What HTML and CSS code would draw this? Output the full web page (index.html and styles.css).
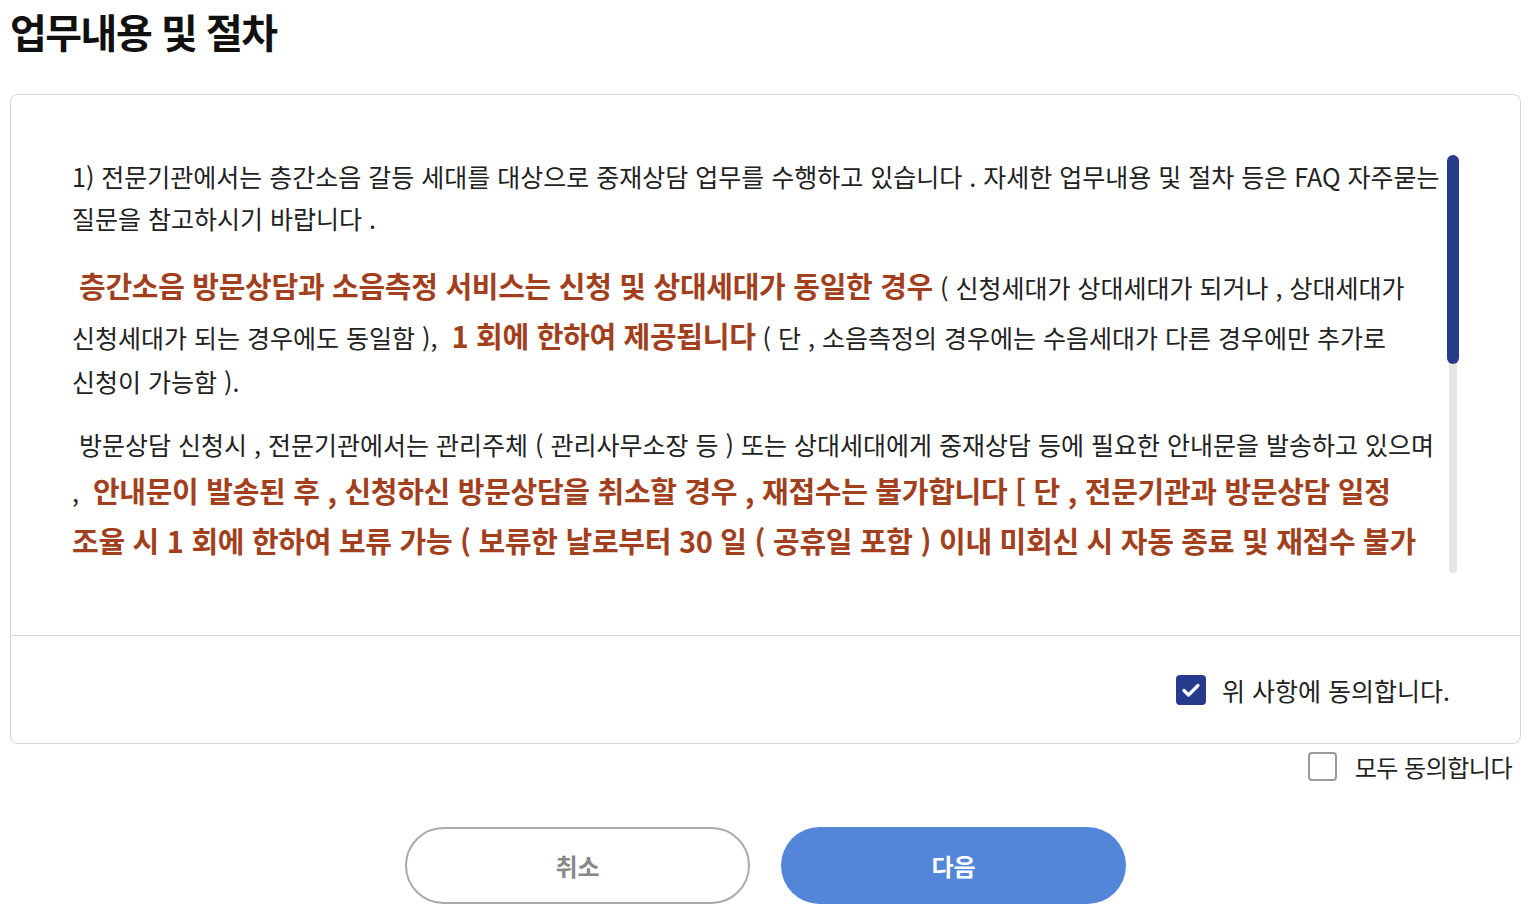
FILE: index.html
```html
<!DOCTYPE html>
<html lang="ko">
<head>
  <meta charset="UTF-8">
  <title>업무내용 및 절차</title>
  <link rel="stylesheet" href="styles.css">
</head>
<body>
  <h1 class="page-title">업무내용 및 절차</h1>

  <div class="terms-box">
    <div class="terms-body">
      <div class="scroll-wrap">
        <div class="terms-scroll" id="termsScroll">
          <p>1) 전문기관에서는 층간소음 갈등 세대를 대상으로 중재상담 업무를 수행하고 있습니다 . 자세한 업무내용 및 절차 등은 FAQ 자주묻는<br>질문을 참고하시기 바랍니다 .</p>
          <p>&nbsp;<strong class="warn">층간소음 방문상담과 소음측정 서비스는 신청 및 상대세대가 동일한 경우</strong> ( 신청세대가 상대세대가 되거나 , 상대세대가<br>신청세대가 되는 경우에도 동일함 ),&nbsp; <strong class="warn">1 회에 한하여 제공됩니다</strong> ( 단 , 소음측정의 경우에는 수음세대가 다른 경우에만 추가로<br>신청이 가능함 ).</p>
          <p>&nbsp;방문상담 신청시 , 전문기관에서는 관리주체 ( 관리사무소장 등 ) 또는 상대세대에게 중재상담 등에 필요한 안내문을 발송하고 있으며<br>,&nbsp; <strong class="warn">안내문이 발송된 후 , 신청하신 방문상담을 취소할 경우 , 재접수는 불가합니다 [ 단 , 전문기관과 방문상담 일정<br>조율 시 1 회에 한하여 보류 가능 ( 보류한 날로부터 30 일 ( 공휴일 포함 ) 이내 미회신 시 자동 종료 및 재접수 불가<br>) ]</strong> .</p>
          <p>2) 방문상담은 신청서 접수 후 전문기관의 검토를 거쳐 진행되며 , 상대세대의 동의가 없는 경우 상담이 제한될 수 있습니다 .</p>
          <p>3) 소음측정은 방문상담 이후 필요하다고 판단되는 경우에 한하여 실시되며 , 측정 일정은 전문기관과 협의하여 정합니다 .</p>
          <p>4) 신청 내용이 사실과 다르거나 허위로 작성된 경우 신청이 취소될 수 있습니다 .</p>
          <p>5) 상담 결과는 신청세대와 상대세대에 안내되며 , 전문기관은 법적 구속력이 있는 판단을 하지 않습니다 .</p>
          <p>6) 개인정보는 중재상담 업무 수행을 위한 목적으로만 이용되며 , 관련 법령에 따라 보관 기간이 지난 후에는 지체 없이<br>파기됩니다 .</p>
        </div>
        <div class="scroll-track" id="scrollTrack">
          <div class="scroll-thumb" id="scrollThumb"></div>
        </div>
      </div>
    </div>
    <div class="terms-agree">
      <label class="check">
        <input type="checkbox" checked>
        <span class="check-box">
          <svg viewBox="0 0 30 30" width="30" height="30"><path d="M8 15.5l4.5 4.5L22 10.5" fill="none" stroke="#fff" stroke-width="3.2" stroke-linecap="round" stroke-linejoin="round"/></svg>
        </span>
        위 사항에 동의합니다.
      </label>
    </div>
  </div>

  <div class="agree-all">
    <label class="check check-sm">
      <input type="checkbox">
      <span class="check-box"></span>
      모두 동의합니다
    </label>
  </div>

  <div class="btn-row">
    <button class="btn btn-cancel" type="button">취소</button>
    <button class="btn btn-next" type="button">다음</button>
  </div>

  <script>
    const termsScroll = document.getElementById('termsScroll');
    const scrollTrack = document.getElementById('scrollTrack');
    const scrollThumb = document.getElementById('scrollThumb');

    function updateThumb() {
      const trackHeight = scrollTrack.clientHeight;
      const ratio = termsScroll.clientHeight / termsScroll.scrollHeight;
      const thumbHeight = Math.max(30, trackHeight * ratio);
      const maxScroll = termsScroll.scrollHeight - termsScroll.clientHeight;
      const top = maxScroll > 0 ? (termsScroll.scrollTop / maxScroll) * (trackHeight - thumbHeight) : 0;
      scrollThumb.style.height = thumbHeight + 'px';
      scrollThumb.style.top = top + 'px';
    }

    termsScroll.addEventListener('scroll', updateThumb);
    window.addEventListener('resize', updateThumb);
    updateThumb();
  </script>
</body>
</html>
```

FILE: styles.css
```css
html, body {
  margin: 0;
  padding: 0;
  background: #fff;
}

body {
  padding: 0 7px 0 10px;
  font-family: "Noto Sans CJK KR", "Noto Sans", sans-serif;
  color: #222;
}

.page-title {
  margin: 4px 0 36px;
  font-size: 40px;
  line-height: 54px;
  font-weight: 700;
  letter-spacing: -1.5px;
  color: #111;
}

.terms-box {
  border: 1px solid #d6d6d6;
  border-radius: 8px;
}

.terms-body {
  padding: 60px 61px 62px 61px;
  border-bottom: 1px solid #d6d6d6;
}

.scroll-wrap {
  display: flex;
  height: 418px;
}

.terms-scroll {
  flex: 1;
  overflow-y: auto;
  scrollbar-width: none;
}

.terms-scroll::-webkit-scrollbar {
  display: none;
}

.scroll-track {
  position: relative;
  width: 8px;
  margin: 0 2px;
  background: #e6e6e6;
  border-radius: 4px;
}

.scroll-thumb {
  position: absolute;
  left: -2px;
  width: 12px;
  background: #263b8b;
  border-radius: 6px;
}

.terms-scroll p {
  margin: 0 0 21px;
  font-size: 25px;
  line-height: 42px;
  color: #222;
}

.terms-scroll .warn {
  font-size: 29px;
  line-height: 50px;
  font-weight: 700;
  letter-spacing: -0.3px;
  color: #a2401d;
}

.terms-agree {
  height: 107px;
  display: flex;
  justify-content: flex-end;
  align-items: center;
  padding-right: 70px;
}

.check {
  display: flex;
  align-items: center;
  gap: 16px;
  font-size: 25px;
  color: #222;
  cursor: pointer;
}

.check input {
  display: none;
}

.check-box {
  width: 30px;
  height: 30px;
  box-sizing: border-box;
  border: 2px solid #9a9a9a;
  border-radius: 4px;
  background: #fff;
}

.check-box svg {
  display: block;
  margin: -2px;
}

.check input:checked + .check-box {
  background: #263b8b;
  border-color: #263b8b;
}

.agree-all {
  display: flex;
  justify-content: flex-end;
  padding: 5px 9px 0 0;
}

.check-sm {
  gap: 18px;
  font-size: 24px;
  letter-spacing: -0.5px;
}

.check-sm .check-box {
  width: 29px;
  height: 29px;
}

.btn-row {
  display: flex;
  justify-content: center;
  gap: 31px;
  margin-top: 43px;
}

.btn {
  width: 345px;
  height: 77px;
  border-radius: 40px;
  font-family: inherit;
  font-size: 24px;
  font-weight: 700;
  cursor: pointer;
}

.btn-cancel {
  background: #fff;
  border: 2px solid #aaa;
  color: #888;
}

.btn-next {
  background: #5385d9;
  border: 0;
  color: #fff;
}
```
